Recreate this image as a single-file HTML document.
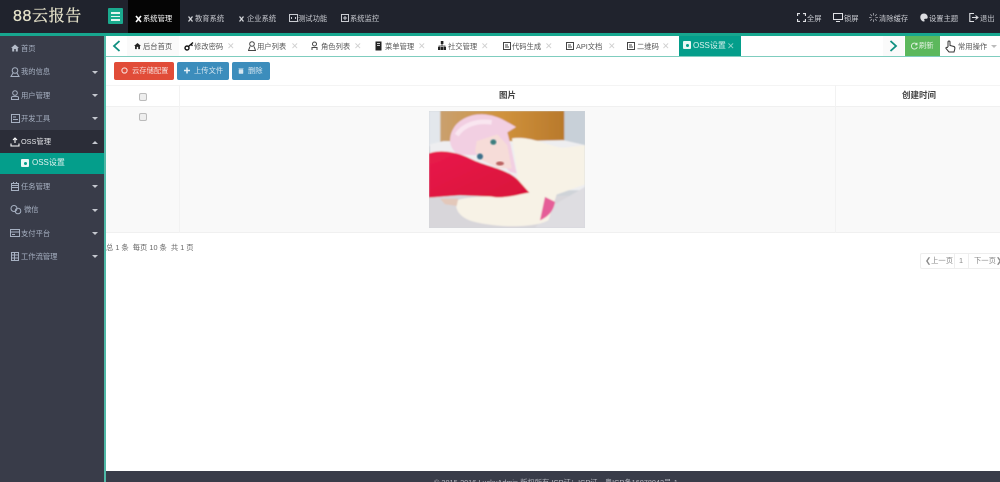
<!DOCTYPE html>
<html lang="zh"><head><meta charset="utf-8"><title>88云报告</title>
<style>
html,body{margin:0;padding:0;width:1000px;height:482px;overflow:hidden;background:#fff;font-family:"Liberation Sans","Noto Sans CJK SC",sans-serif}
body{filter:blur(.3px)}
div,span,svg{position:absolute}
.t{white-space:nowrap;line-height:10px;font-size:7.3px}
.top{color:#c9cbd1;top:14px}
.side{color:#a7b1c2;font-size:7.3px}
.tab{color:#555;top:42px}
.x{color:#cfcfcf;top:41px;font-size:9px}
.arr{width:0;height:0;border-left:3.5px solid transparent;border-right:3.5px solid transparent;border-top:3.5px solid #c5c8cf;left:92px}
.ic{fill:none;stroke:#a7b1c2;stroke-width:1}
.tc{fill:none;stroke:#444;stroke-width:1}
.btn{height:18px;border-radius:2px;top:62px;color:#dfeaf2;line-height:18px;font-size:7.3px;white-space:nowrap}
.cb{width:6px;height:6px;background:#eee;border:1px solid #bbb;border-radius:2px}
</style></head><body>

<!-- header -->
<div style="left:0;top:0;width:1000px;height:34px;background:#20232d"></div>
<div style="left:128px;top:0;width:52px;height:34px;background:#050505"></div>
<div style="left:0;top:33px;width:1000px;height:3px;background:#17a78f"></div>
<div class="t" style="left:13px;top:7px;font-size:16px;line-height:20px;color:#e8e5cc;font-family:'Liberation Sans','Noto Serif CJK SC',serif;letter-spacing:.6px;-webkit-text-stroke:.25px #e8e5cc">88云报告</div>
<div style="left:108px;top:8px;width:15px;height:16px;background:#1aaa8e;border-radius:1px"></div>
<div style="left:111px;top:12px;width:9px;height:1.5px;background:#e5f5f1"></div>
<div style="left:111px;top:15.500px;width:9px;height:1.5px;background:#e5f5f1"></div>
<div style="left:111px;top:19px;width:9px;height:1.5px;background:#e5f5f1"></div>

<svg style="left:135px;top:15px" width="7" height="8" viewBox="0 0 7 8"><path d="M1 1L6 7M6 1L1 7" stroke="#fff" stroke-width="1.6"/></svg>
<div class="t top" style="left:143px;color:#fff">系统管理</div>
<svg style="left:188px;top:16px" width="5" height="6" viewBox="0 0 5 6"><path d="M0.5 .5L4.5 5.5M4.5 .5L.5 5.5" stroke="#d6d8dc" stroke-width="1.3"/></svg>
<div class="t top" style="left:195px">教育系统</div>
<svg style="left:239px;top:16px" width="5" height="6" viewBox="0 0 5 6"><path d="M0.5 .5L4.5 5.5M4.5 .5L.5 5.5" stroke="#d6d8dc" stroke-width="1.3"/></svg>
<div class="t top" style="left:247px">企业系统</div>
<svg style="left:289px;top:14px" width="9" height="8" viewBox="0 0 9 8"><rect x=".5" y=".5" width="8" height="7" fill="none" stroke="#c9cbd1"/><path d="M2.500 3v2M6.500 3v2" stroke="#c9cbd1"/></svg>
<div class="t top" style="left:298px">测试功能</div>
<svg style="left:341px;top:14px" width="8" height="8" viewBox="0 0 8 8"><rect x=".5" y=".5" width="7" height="7" fill="none" stroke="#c9cbd1"/><path d="M2 4h4M4 2v4" stroke="#c9cbd1"/></svg>
<div class="t top" style="left:350px">系统监控</div>

<svg style="left:797px;top:13px" width="9" height="9" viewBox="0 0 9 9"><path d="M.5 3V.5H3M6 .5H8.500V3M8.500 6V8.500H6M3 8.500H.5V6" fill="none" stroke="#e0e1e5" stroke-width="1.200"/></svg>
<div class="t top" style="left:807px">全屏</div>
<svg style="left:833px;top:13px" width="10" height="9" viewBox="0 0 10 9"><rect x=".5" y=".5" width="9" height="6" fill="none" stroke="#e0e1e5"/><path d="M3 8.500h4" stroke="#e0e1e5"/></svg>
<div class="t top" style="left:844px">锁屏</div>
<svg style="left:869px;top:13px" width="9" height="9" viewBox="0 0 9 9"><path d="M4.500 0v2.500M4.500 6.500V9M0 4.500h2.500M6.500 4.500H9M1.300 1.300l1.700 1.700M6 6l1.700 1.700M7.700 1.300L6 3M3 6L1.300 7.700" stroke="#a9abb2" stroke-width=".8"/></svg>
<div class="t top" style="left:879px">清除缓存</div>
<svg style="left:920px;top:13px" width="8" height="9" viewBox="0 0 8 9"><path d="M4 .5C1.800.5.300 2 .3 4.200.3 6.500 2 8.500 4 8.500 4.800 8.500 4.800 7.500 4.300 7 3.900 6.300 4.500 5.700 5.200 5.700H6.500C7.300 5.700 7.800 5 7.700 4 7.500 2 6 .5 4 .5Z" fill="#dcdde1"/></svg>
<div class="t top" style="left:929px">设置主题</div>
<svg style="left:969px;top:13px" width="10" height="9" viewBox="0 0 10 9"><path d="M5 .5H.8V8.500H5" fill="none" stroke="#e0e1e5" stroke-width="1.100"/><path d="M3 4.500H8M6.500 2.500L9 4.500L6.500 6.500" fill="none" stroke="#e0e1e5"/></svg>
<div class="t top" style="left:980px">退出</div>

<!-- sidebar -->
<div style="left:0;top:36px;width:104px;height:446px;background:#393c49"></div>
<div style="left:104px;top:36px;width:2px;height:446px;background:#4fb8a6"></div>
<div style="left:0;top:130px;width:104px;height:24px;background:#2b2d38"></div>
<div style="left:0;top:153px;width:104px;height:21px;background:#049e8b"></div>

<svg style="left:11px;top:44px" width="8" height="8" viewBox="0 0 8 8"><path d="M4 .5L8 4H6.800V7.500H4.800V5H3.200V7.500H1.200V4H0Z" fill="#b5bcc9"/></svg>
<div class="t side" style="left:21px;top:44px">首页</div>
<svg class="ic" style="left:10px;top:67px" width="10" height="10" viewBox="0 0 10 10"><circle cx="5" cy="3.500" r="2.800"/><path d="M3 6L1 9.500H9L7 6"/></svg>
<div class="t side" style="left:21px;top:67px">我的信息</div>
<div class="arr" style="top:71px"></div>
<svg class="ic" style="left:10px;top:90px" width="10" height="10" viewBox="0 0 10 10"><circle cx="5" cy="3" r="2.300"/><path d="M1.500 9.500V7.500C1.500 6 8.500 6 8.500 7.500V9.500Z"/></svg>
<div class="t side" style="left:21px;top:91px">用户管理</div>
<div class="arr" style="top:94px"></div>
<svg class="ic" style="left:11px;top:114px" width="9" height="9" viewBox="0 0 9 9"><rect x=".5" y=".5" width="8" height="8"/><path d="M2 3h3M2 5.500h5"/></svg>
<div class="t side" style="left:21px;top:114px">开发工具</div>
<div class="arr" style="top:117px"></div>
<svg style="left:10px;top:137px" width="10" height="10" viewBox="0 0 10 10"><path d="M5 6V1M3 3L5 1L7 3M1 6.500V9H9V6.500" fill="none" stroke="#fff" stroke-width="1.100"/></svg>
<div class="t side" style="left:21px;top:137px;color:#e4e5e8">OSS管理</div>
<div style="left:92px;top:141px;width:0;height:0;border-left:3.500px solid transparent;border-right:3.500px solid transparent;border-bottom:3.500px solid #c5c8cf"></div>
<div style="left:21px;top:159px;width:8px;height:8px;background:#eaf7f5;border-radius:1px"></div>
<div style="left:23.500px;top:161.500px;width:3px;height:3px;background:#049e8b;border-radius:50%"></div>
<div class="t side" style="left:32px;top:158px;color:#e2f3f0;font-size:8px">OSS设置</div>
<svg class="ic" style="left:11px;top:182px" width="8" height="9" viewBox="0 0 8 9"><rect x=".5" y="1.500" width="7" height="7"/><path d="M.5 3.500h7M.5 5.500h7M2.500 0v2M5.500 0v2"/></svg>
<div class="t side" style="left:21px;top:182px">任务管理</div>
<div class="arr" style="top:185px"></div>
<svg class="ic" style="left:10px;top:205px" width="12" height="10" viewBox="0 0 12 10"><circle cx="4" cy="3.500" r="3"/><circle cx="8" cy="6" r="2.800"/></svg>
<div class="t side" style="left:24px;top:205px">微信</div>
<div class="arr" style="top:209px"></div>
<svg class="ic" style="left:10px;top:229px" width="10" height="8" viewBox="0 0 10 8"><rect x=".5" y=".5" width="9" height="7"/><path d="M.5 3h9M2 5.500h3"/></svg>
<div class="t side" style="left:21px;top:229px">支付平台</div>
<div class="arr" style="top:232px"></div>
<svg class="ic" style="left:11px;top:252px" width="8" height="9" viewBox="0 0 8 9"><rect x=".5" y=".5" width="7" height="8"/><path d="M3.500 .5v8M.5 3h7M.5 6h7"/></svg>
<div class="t side" style="left:21px;top:252px">工作流管理</div>
<div class="arr" style="top:255px"></div>

<!-- tab bar -->
<div style="left:106px;top:36px;width:894px;height:20px;background:#fff"></div>
<div style="left:106px;top:56px;width:894px;height:1px;background:#7fcdbf"></div>
<div style="left:127px;top:36px;width:52px;height:20px;background:#fafafa"></div>
<svg style="left:112px;top:40px" width="9" height="12" viewBox="0 0 9 12"><path d="M7.500 1L2 6L7.500 11" fill="none" stroke="#0f8f80" stroke-width="1.800"/></svg>
<svg style="left:134px;top:42px" width="7" height="8" viewBox="0 0 8 8"><path d="M4 .5L8 4H6.800V7.500H4.800V5H3.200V7.500H1.200V4H0Z" fill="#222"/></svg>
<div class="t tab" style="left:143px">后台首页</div>
<svg style="left:184px;top:41px" width="10" height="10" viewBox="0 0 10 10"><circle cx="3" cy="7" r="2" fill="none" stroke="#111" stroke-width="1.400"/><path d="M4.500 5.500L9 1.500M7 3.300L8.500 4.800" stroke="#111" stroke-width="1.400"/></svg>
<div class="t tab" style="left:194px">修改密码</div><div class="t x" style="left:227px">✕</div>
<svg class="tc" style="left:248px;top:41px" width="8" height="10" viewBox="0 0 8 10"><circle cx="4" cy="3" r="2.300"/><path d="M2 5.500L.5 9.500H7.500L6 5.500"/></svg>
<div class="t tab" style="left:257px">用户列表</div><div class="t x" style="left:291px">✕</div>
<svg class="tc" style="left:311px;top:41px" width="8" height="10" viewBox="0 0 8 10"><circle cx="3.500" cy="3" r="2"/><path d="M1 9V6.500H6V9"/></svg>
<div class="t tab" style="left:321px">角色列表</div><div class="t x" style="left:354px">✕</div>
<svg style="left:375px;top:41px" width="8" height="10" viewBox="0 0 8 10"><rect x=".5" y=".5" width="6" height="9" fill="#222"/><path d="M2 2.500h3M2 4.500h3" stroke="#fff" stroke-width=".7"/></svg>
<div class="t tab" style="left:385px">菜单管理</div><div class="t x" style="left:418px">✕</div>
<svg style="left:438px;top:41px" width="8" height="9" viewBox="0 0 8 9"><rect x="2.800" y="0" width="2.600" height="3" fill="#222"/><path d="M4 3V5M1 6V5H7V6" stroke="#222" fill="none" stroke-width=".8"/><rect x="0" y="6" width="2.400" height="3" fill="#222"/><rect x="2.800" y="6" width="2.400" height="3" fill="#222"/><rect x="5.600" y="6" width="2.400" height="3" fill="#222"/></svg>
<div class="t tab" style="left:448px">社交管理</div><div class="t x" style="left:481px">✕</div>
<svg class="tc" style="left:503px;top:42px" width="8" height="8" viewBox="0 0 8 8"><rect x=".5" y=".5" width="7" height="7"/><path d="M2 3h3M2 5h4"/></svg>
<div class="t tab" style="left:512px">代码生成</div><div class="t x" style="left:545px">✕</div>
<svg class="tc" style="left:566px;top:42px" width="8" height="8" viewBox="0 0 8 8"><rect x=".5" y=".5" width="7" height="7"/><path d="M2 3h3M2 5h4"/></svg>
<div class="t tab" style="left:576px">API文档</div><div class="t x" style="left:608px">✕</div>
<svg class="tc" style="left:627px;top:42px" width="8" height="8" viewBox="0 0 8 8"><rect x=".5" y=".5" width="7" height="7"/><path d="M2 3h3M2 5h4"/></svg>
<div class="t tab" style="left:637px">二维码</div><div class="t x" style="left:662px">✕</div>
<div style="left:679px;top:36px;width:62px;height:20px;background:#049e8b"></div>
<div style="left:683px;top:41px;width:8px;height:8px;background:#eaf7f5;border-radius:1px"></div>
<div style="left:685.500px;top:43.500px;width:3px;height:3px;background:#049e8b;border-radius:50%"></div>
<div class="t" style="left:693px;top:41px;color:#d9f1ed;font-size:8px">OSS设置</div>
<div class="t x" style="left:727px;color:#93d6cb">✕</div>

<div style="left:883px;top:36px;width:21px;height:20px;background:#fafafa"></div>
<svg style="left:889px;top:40px" width="9" height="12" viewBox="0 0 9 12"><path d="M1.500 1L7 6L1.500 11" fill="none" stroke="#0f8f80" stroke-width="1.800"/></svg>
<div style="left:905px;top:36px;width:35px;height:20px;background:#5cb85c"></div>
<svg style="left:911px;top:42px" width="7" height="8" viewBox="0 0 7 8"><path d="M6 2.500A3 3 0 1 0 6.300 5M6 .8V2.800H4" fill="none" stroke="#e5f3e5" stroke-width=".9"/></svg>
<div class="t" style="left:919px;top:41px;color:#e5f3e5">刷新</div>
<svg style="left:945px;top:40px" width="11" height="13" viewBox="0 0 11 13"><path d="M3 7V2a1 1 0 0 1 2 0V5.500L9 6.500C10 7 10 8 9.800 9L9 12H4L1 8.500C.5 7.500 1.800 7 3 7.500" fill="none" stroke="#333" stroke-width="1"/></svg>
<div class="t tab" style="left:958px">常用操作</div>
<div style="left:991px;top:45px;width:0;height:0;border-left:3px solid transparent;border-right:3px solid transparent;border-top:3px solid #bbb"></div>

<!-- buttons -->
<div class="btn" style="left:114px;width:60px;background:#e14c38"></div>
<svg style="left:121px;top:67px" width="7" height="7" viewBox="0 0 7 7"><circle cx="3.500" cy="3.500" r="2.600" fill="none" stroke="#f6dcd8" stroke-width="1.100"/></svg>
<div class="t" style="left:132px;top:66px;color:#f6dcd8">云存储配置</div>
<div class="btn" style="left:177px;width:52px;background:#3c8dbc"></div>
<svg style="left:184px;top:67px" width="6" height="7" viewBox="0 0 6 7"><path d="M3 .5v6M0 3.500h6" stroke="#e6f0f6" stroke-width="1.500"/></svg>
<div class="t" style="left:194px;top:66px;color:#d6e6f0">上传文件</div>
<div class="btn" style="left:232px;width:38px;background:#3c8dbc"></div>
<svg style="left:238px;top:67px" width="6" height="7" viewBox="0 0 6 7"><path d="M.5 1.500h5M1 2.500h4V6.500H1Z" fill="#d6e6f0" stroke="#d6e6f0" stroke-width=".5"/></svg>
<div class="t" style="left:248px;top:66px;color:#d6e6f0">删除</div>

<!-- table -->
<div style="left:106px;top:106px;width:894px;height:127px;background:#f9f9f9"></div>
<div style="left:106px;top:85px;width:894px;height:1px;background:#f4f4f4"></div>
<div style="left:106px;top:106px;width:894px;height:1px;background:#f0f0f0"></div>
<div style="left:106px;top:232px;width:894px;height:1px;background:#f0f0f0"></div>
<div style="left:179px;top:85px;width:1px;height:148px;background:#f2f2f2"></div>
<div style="left:835px;top:85px;width:1px;height:148px;background:#f2f2f2"></div>
<div class="cb" style="left:138.500px;top:92.500px"></div>
<div class="cb" style="left:138.500px;top:112.500px"></div>
<div class="t" style="left:499px;top:90px;font-size:8.500px;font-weight:bold;color:#444">图片</div>
<div class="t" style="left:902px;top:90px;font-size:8.500px;font-weight:bold;color:#444">创建时间</div>

<!-- photo -->
<svg style="left:429px;top:111px" width="156" height="117" viewBox="27 18 468 350" preserveAspectRatio="none">
<defs><filter id="b" x="-10%" y="-10%" width="120%" height="120%"><feGaussianBlur stdDeviation="2.500"/></filter>
<linearGradient id="w" x1="0" x2="1"><stop offset="0" stop-color="#c9a06f"/><stop offset=".5" stop-color="#d0923c"/><stop offset="1" stop-color="#b8792b"/></linearGradient>
<linearGradient id="r" x1="0" x2="1" y1="0" y2="1"><stop offset="0" stop-color="#e81b4a"/><stop offset="1" stop-color="#d9103a"/></linearGradient>
<clipPath id="c"><rect x="27" y="18" width="468" height="350"/></clipPath></defs>
<g clip-path="url(#c)"><rect x="27" y="18" width="468" height="350" fill="#cfd3d8"/>
<g filter="url(#b)">
<rect x="27" y="18" width="34" height="105" fill="#e3e7ec"/>
<rect x="61" y="18" width="372" height="92" fill="url(#w)"/>
<rect x="433" y="18" width="62" height="105" fill="#c8d0d8"/>
<path d="M30 118L70 108H300L430 105L495 120V255H30Z" fill="#eeeef0"/>
<path d="M27 272H495V368H27Z" fill="#d8d6da"/>
<path d="M345 368L400 300L495 245V368Z" fill="#dedde1"/>
<path d="M90 105C92 55 140 26 190 28C235 30 262 52 288 66L262 82L272 120L290 205L270 200L235 165L170 150L112 148C98 135 90 120 90 105Z" fill="#f2cfe2"/>
<path d="M110 90C130 60 170 45 215 52" fill="none" stroke="#f9e6f0" stroke-width="14"/>
<path d="M170 108L232 88L262 120L275 190L235 188L185 165L165 140Z" fill="#f6dcd8"/>
<path d="M276 100C330 90 390 125 430 128L495 120V238L410 268L385 345C345 368 240 368 165 350C120 340 100 310 112 285C160 268 240 282 285 255L292 205Z" fill="#f7f2e6"/>
<path d="M375 275L405 290C402 315 385 335 360 345Z" fill="#e55d98"/>
<path d="M27 145C60 132 110 140 150 160C200 185 260 190 295 225L328 262C290 268 250 282 215 274L120 270L27 277Z" fill="url(#r)"/>
<path d="M60 280L115 280L110 302L75 297Z" fill="#e3c8ba"/>
</g>
<ellipse cx="180" cy="154" rx="9" ry="9" fill="#3b6f8a" filter="url(#b)"/>
<ellipse cx="220" cy="111" rx="9" ry="8" fill="#3b7d7e" filter="url(#b)"/>
<ellipse cx="240" cy="175" rx="12" ry="6" fill="#b9605e" filter="url(#b)"/>
</g></svg>

<!-- pagination -->
<div class="t" style="left:106px;top:243px;color:#666">总 1 条&nbsp; 每页 10 条&nbsp; 共 1 页</div>
<div style="left:920px;top:253px;width:80px;height:16px;border:1px solid #eee;border-right:0;box-sizing:border-box;border-radius:2px 0 0 2px"></div>
<div style="left:954px;top:253px;width:1px;height:16px;background:#eee"></div>
<div style="left:968px;top:253px;width:1px;height:16px;background:#eee"></div>
<div class="t" style="left:925px;top:256px;color:#888">❮上一页</div>
<div class="t" style="left:959px;top:256px;color:#888">1</div>
<div class="t" style="left:974px;top:256px;color:#888">下一页❯</div>

<!-- footer -->
<div style="left:106px;top:471px;width:894px;height:11px;background:#393c49"></div>
<div class="t" style="left:434px;top:478px;color:#b8bac2">© 2015-2016 LuckyAdmin 版权所有 ICP证：ICP证　粤ICP备16078042号-1</div>
</body></html>
